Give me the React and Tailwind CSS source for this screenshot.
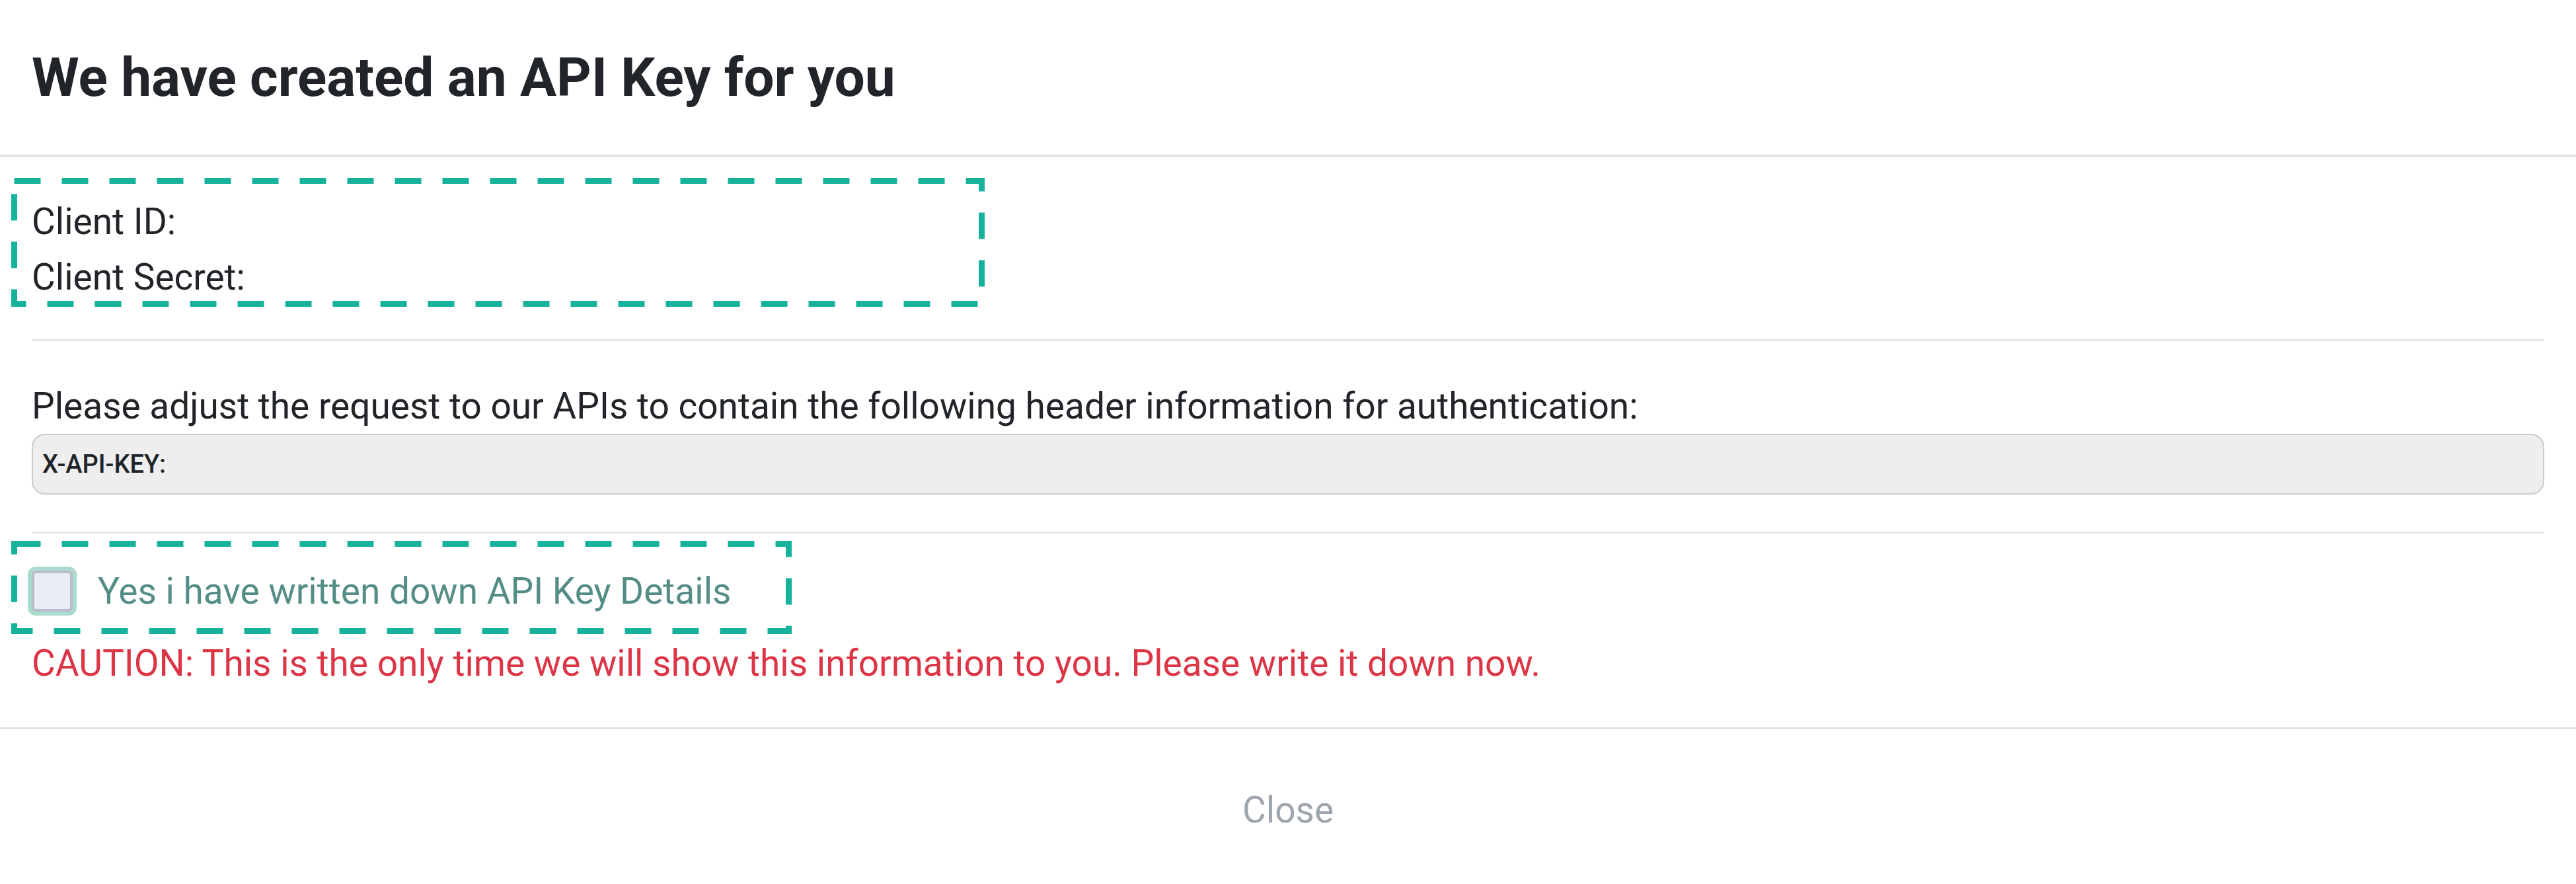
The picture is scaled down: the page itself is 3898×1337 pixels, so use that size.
import React from 'react';

export default function App() {
  return (
    <div className="relative min-h-[1337px] bg-white text-[#212529]" style={{ fontFamily: 'Roboto, "Liberation Sans", sans-serif' }}>
      {/* ── Header ── */}
      <div className="flex h-[237px] items-center border-b-[3px] border-[#dee2e6] px-[48px]">
        <h1 className="text-[82px] font-bold leading-[1.2]">We have created an API Key for you</h1>
      </div>

      {/* ── Body ── */}
      <div className="px-[48px] pt-[56px] pb-[55px] text-[55px] leading-[84px]">
        <div>
          <p>Client ID:</p>
          <p>Client Secret:</p>
        </div>

        <hr className="mt-[52px] border-t-[3px] border-[#e6e6e6]" />

        <p className="mt-[56px]">Please adjust the request to our APIs to contain the following header information for authentication:</p>
        <div className="flex h-[92px] items-center rounded-[20px] border-2 border-[#cccccc] bg-[#eeeeee] pl-[14px] text-[38px] font-medium leading-none">
          X-API-KEY:
        </div>

        <hr className="mt-[56px] border-t-[3px] border-[#e6e6e6]" />

        <label className="mt-[45px] flex items-center gap-[38px]">
          <span className="h-[62px] w-[62px] shrink-0 rounded-[6px] border-[4px] border-[#b9bdc9] bg-[#e8edf4] shadow-[0_0_0_6px_#a9dccf]" />
          <span className="text-[#548c86]">Yes i have written down API Key Details</span>
        </label>
        <p className="mt-[25px] text-[#dc3545]">CAUTION: This is the only time we will show this information to you. Please write it down now.</p>
      </div>

      {/* ── Footer ── */}
      <div className="flex justify-center border-t-[3px] border-[#dee2e6] pt-[80px] pb-[73px]">
        <button className="text-[55px] leading-[84px] text-[#9ea5ad]">Close</button>
      </div>

      {/* ── Highlight annotations ── */}
      <svg className="pointer-events-none absolute inset-0 h-full w-full" fill="none">
        <rect x="21.5" y="273.5" width="1464" height="186" stroke="#17b29b" strokeWidth="9" strokeDasharray="40 32" />
        <rect x="21.5" y="822.5" width="1172" height="132" stroke="#17b29b" strokeWidth="9" strokeDasharray="40 32" />
      </svg>
    </div>
  );
}
